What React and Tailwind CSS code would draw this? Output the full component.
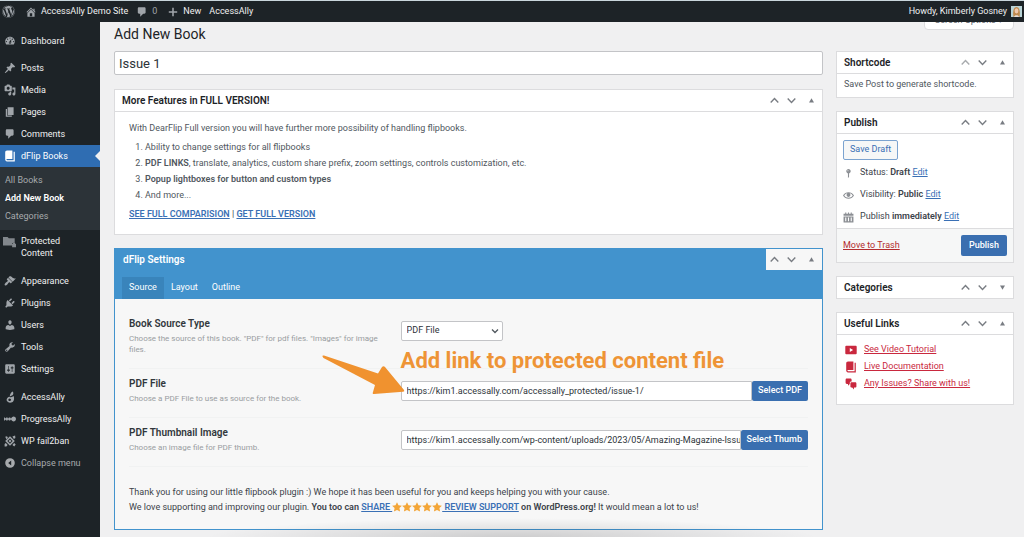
import { useState } from "react";
import { FaWordpress } from "react-icons/fa";

const paths = {
  dashboard: "M3.76 16h12.48c1.1-1.37 1.76-3.11 1.76-5 0-4.42-3.58-8-8-8s-8 3.58-8 8c0 1.89.66 3.63 1.76 5zM10 4c.55 0 1 .45 1 1s-.45 1-1 1-1-.45-1-1 .45-1 1-1zM6 6c.55 0 1 .45 1 1s-.45 1-1 1-1-.45-1-1 .45-1 1-1zm8 0c.55 0 1 .45 1 1s-.45 1-1 1-1-.45-1-1 .45-1 1-1zm-5.37 5.55L12 7v6c0 1.1-.9 2-2 2s-2-.9-2-2c0-.57.24-1.08.63-1.45zM4 10c.55 0 1 .45 1 1s-.45 1-1 1-1-.45-1-1 .45-1 1-1zm12 0c.55 0 1 .45 1 1s-.45 1-1 1-1-.45-1-1 .45-1 1-1zm-5 3c0-.55-.45-1-1-1s-1 .45-1 1 .45 1 1 1 1-.45 1-1z",
  pin: "M10.44 3.02l1.82-1.82 6.36 6.35-1.83 1.82c-1.05-.68-2.48-.57-3.41.36l-.75.75c-.92.93-1.04 2.35-.35 3.41l-1.83 1.82-2.41-2.41-2.8 2.79c-.42.42-3.38 2.71-3.8 2.29s1.86-3.39 2.28-3.81l2.79-2.79L4.1 9.36l1.83-1.82c1.05.69 2.48.57 3.4-.36l.75-.75c.93-.92 1.05-2.35.36-3.41z",
  media: "M13 11V4c0-.55-.45-1-1-1h-1.67L9 1H5L3.67 3H2c-.55 0-1 .45-1 1v7c0 .55.45 1 1 1h10c.55 0 1-.45 1-1zM7 4.5c1.38 0 2.5 1.12 2.5 2.5S8.38 9.5 7 9.5 4.5 8.38 4.5 7 5.62 4.5 7 4.5zM14 6h5v10.5c0 1.38-1.12 2.5-2.5 2.5S14 17.88 14 16.5s1.12-2.5 2.5-2.5c.17 0 .34.02.5.05V9h-3V6zm-4 8.05V13h2v3.5c0 1.38-1.12 2.5-2.5 2.5S7 17.88 7 16.5 8.12 14 9.5 14c.17 0 .34.02.5.05z",
  page: "M6 15V2h10v13H6zm-1 1h8v2H3V5h2v11z",
  comment: "M5 2h9c1.1 0 2 .9 2 2v7c0 1.1-.9 2-2 2h-2l-5 5v-5H5c-1.1 0-2-.9-2-2V4c0-1.1.9-2 2-2z",
  book: "M16 3h2v16H5c-1.66 0-3-1.34-3-3V4c0-1.66 1.34-3 3-3h9v14H5c-.55 0-1 .45-1 1s.45 1 1 1h11V3z",
  folder: "M0 3h7l2 2h9v7h-2a2 2 0 0 0-2 2v2H0zM15 14v-.5a2 2 0 0 1 4 0v.5h1v5h-6v-5z",
  brush: "M14.48 11.06L7.41 3.99l1.5-1.5c.5-.56 2.3-.47 3.51.32 1.21.8 1.43 1.28 2.91 2.1 1.18.64 2.45 1.26 4.45.85zm-.71.71L6.7 4.7 4.93 6.47c-.39.39-.39 1.02 0 1.41l1.06 1.06c.39.39.39 1.03 0 1.42-.6.6-1.43 1.11-2.21 1.69-.35.26-.7.53-1.01.84C1.43 14.23.4 16.08 1.4 17.07c.99 1 2.84-.03 4.18-1.36.31-.31.58-.66.85-1.02.57-.78 1.08-1.61 1.69-2.21.39-.39 1.02-.39 1.41 0l1.06 1.06c.39.39 1.02.39 1.41 0z",
  plug: "M13.11 4.36L9.87 7.6 8 5.73l3.24-3.24c.35-.34 1.05-.2 1.56.32.52.51.66 1.21.31 1.55zm-8 1.77l.91-1.12 9.01 9.01-1.19.84c-.71.71-2.63 1.16-3.82 1.16H6.14L4.9 17.26c-.59.59-1.54.59-2.12 0-.59-.58-.59-1.53 0-2.12l1.24-1.24v-3.88c0-1.13.4-3.19 1.09-3.89zm7.26 3.97l3.24-3.24c.34-.35 1.04-.21 1.55.31.52.51.66 1.21.31 1.55l-3.24 3.25z",
  user: "M10 9.25c-2.27 0-2.73-3.44-2.73-3.44C7 4.02 7.82 2 9.97 2c2.16 0 2.98 2.02 2.71 3.81 0 0-.41 3.44-2.68 3.44zm0 2.57L12.72 10c2.39 0 4.52 2.33 4.52 4.53v2.49s-3.65 1.13-7.24 1.13c-3.65 0-7.24-1.13-7.24-1.13v-2.49c0-2.25 1.94-4.48 4.47-4.48z",
  wrench: "M16.68 9.77c-1.34 1.34-3.3 1.67-4.95.99l-5.41 6.52c-.99.99-2.59.99-3.58 0s-.99-2.59 0-3.57l6.52-5.42c-.68-1.65-.35-3.61.99-4.95 1.28-1.28 3.12-1.62 4.72-1.06l-2.89 2.89 2.82 2.82 2.86-2.87c.53 1.58.18 3.39-1.08 4.65zM3.81 16.21c.4.39 1.04.39 1.43 0 .4-.4.4-1.04 0-1.43-.39-.4-1.03-.4-1.43 0-.39.39-.39 1.03 0 1.43z",
  sliders: "M18 16V4c0-1.1-.9-2-2-2H4c-1.1 0-2 .9-2 2v12c0 1.1.9 2 2 2h12c1.1 0 2-.9 2-2zM8 11h1c.55 0 1 .45 1 1s-.45 1-1 1H8v1.5c0 .28-.22.5-.5.5s-.5-.22-.5-.5V13H6c-.55 0-1-.45-1-1s.45-1 1-1h1V5.5c0-.28.22-.5.5-.5s.5.22.5.5V11zm5-2h-1c-.55 0-1-.45-1-1s.45-1 1-1h1V5.5c0-.28.22-.5.5-.5s.5.22.5.5V7h1c.55 0 1 .45 1 1s-.45 1-1 1h-1v5.5c0 .28-.22.5-.5.5s-.5-.22-.5-.5V9z",
  ally: "M14.5 1c1.6 1.5 1.2 4.800-.4 6.200L9.500 9c.6-3.500 2-6.500 5-8zM8.500 9.500c3 1.800 5.500.8 7.500-1 1.500 3.500.8 8.500-2.500 10.200-3.500 1.600-8 .3-9-2.700-.8-2.800 1.500-5.500 4-6.500zm.5 3c-1.500.7-2.300 2-1.500 3.300.8 1.200 3 1.200 4 .2 1-1.200 0-3-2.500-3.500z",
  progress: "M0 7.500h1.500v1.200h2V7.500H6v1.200h2V7.500h2.500v1.200h1.700a4 4 0 1 1 0 2.600h-1.700v1.200H8v-1.200H6v1.200H3.500v-1.200h-2v1.200H0z",
  ban: "M10 2l8 8-8 8-8-8zm0 3.500L5.500 10l4.500 4.500 4.500-4.500zm0 2l2.500 2.500-2.500 2.500L7.500 10zM2 3l3-1 1.500 2.500L4 7zM14 2.500L18.500 1 19 5l-2.500 1.500zM1 15l2-1.500 3 3L4 19H1zM17 13.500L19.500 16 17 19l-3-2.500z",
  collapse: "M10 2a8 8 0 1 0 0 16 8 8 0 0 0 0-16zm2 4v8l-5-4z",
  home: "M16 8.500l1.530 1.530-1.060 1.060L10 4.600l-6.470 6.490-1.060-1.060L10 2.500l4 4v-2h2v4zm-6-2.460l6 5.990V18H4v-5.970zM12 17v-5H8v5h4z",
  plus: "M17 8.700v2.600h-5.700V17H8.700v-5.700H3V8.700h5.700V3h2.600v5.700z",
  status: "M14 6c0 1.860-1.280 3.410-3 3.860V16c0 1-2 2-2 2V9.860C7.280 9.410 6 7.860 6 6c0-2.210 1.790-4 4-4s4 1.790 4 4zM8 5c0 .55.45 1 1 1s1-.45 1-1-.45-1-1-1-1 .45-1 1z",
  eye: "M19.7 9.400C17.700 6 14 3.900 10 3.900S2.300 6 .3 9.400L0 10l.3.600c2 3.400 5.700 5.500 9.700 5.500s7.700-2.100 9.700-5.500l.3-.6-.3-.6zM10 14.100c-3.100 0-6-1.600-7.700-4.100C3.600 8 5.700 6.600 8 6.100c-.9.6-1.500 1.700-1.500 2.900 0 1.900 1.600 3.500 3.500 3.500s3.500-1.600 3.500-3.500c0-1.200-.6-2.300-1.500-2.900 2.300.5 4.400 1.900 5.700 3.900-1.700 2.500-4.600 4.100-7.700 4.100z",
  calendar: "M1 3h3V1h2v2h3V1h2v2h3V1h2v2h3v4H1zM1 8h18v11H1zm3 2v7h2v-7zm5 0v7h2v-7zm5 0v7h2v-7z",
  video: "M2 3h16a1.500 1.500 0 0 1 1.500 1.500v11A1.500 1.500 0 0 1 18 17H2a1.500 1.500 0 0 1-1.500-1.500v-11A1.500 1.500 0 0 1 2 3zm6 3.500v7l5.500-3.500z",
  chat: "M11 6h-.82C9.070 6 8 7.200 8 8.160V10l-3 3v-3H3c-1.100 0-2-.9-2-2V3c0-1.100.9-2 2-2h6c1.100 0 2 .9 2 2v3zm0 1h6c1.100 0 2 .9 2 2v5c0 1.100-.9 2-2 2h-2v3l-3-3h-1c-1.100 0-2-.9-2-2V9c0-1.100.9-2 2-2z",
};

function Icon({ name, className }) {
  return (
    <svg viewBox="0 0 20 20" fill="currentColor" fillRule="evenodd" aria-hidden="true" className={`shrink-0 ${className}`}>
      <path d={paths[name]} />
    </svg>
  );
}

const menuTop = [
  { icon: "pin", label: "Posts" },
  { icon: "media", label: "Media" },
  { icon: "page", label: "Pages" },
  { icon: "comment", label: "Comments" },
];

const menuMiddle = [
  { icon: "brush", label: "Appearance" },
  { icon: "plug", label: "Plugins" },
  { icon: "user", label: "Users" },
  { icon: "wrench", label: "Tools" },
  { icon: "sliders", label: "Settings" },
];

const menuBottom = [
  { icon: "ally", label: "AccessAlly" },
  { icon: "progress", label: "ProgressAlly" },
  { icon: "ban", label: "WP fail2ban" },
];

function MenuItem({ icon, label }) {
  return (
    <a href="#" className="flex min-h-[22px] items-center gap-[5px] pl-1 pr-2 text-[#f0f0f1]">
      <Icon name={icon} className="size-3 text-[#a0a5aa]" />
      {label}
    </a>
  );
}

function AdminBar() {
  return (
    <header className="relative z-10 flex h-[22px] items-center border-t border-[#c9d6dc] bg-[#1d2327] pl-0.5 pr-0.5 text-[9px] text-[#f0f0f1]">
      <a href="#" aria-label="About WordPress"><FaWordpress size={13} className="text-[#a0a5aa]" /></a>
      <a href="#" className="ml-2.5 flex items-center gap-1">
        <Icon name="home" className="size-3 text-[#a0a5aa]" />
        AccessAlly Demo Site
      </a>
      <a href="#" className="ml-2 flex items-center gap-1 text-[#a0a5aa]">
        <Icon name="comment" className="size-3" />
        0
      </a>
      <a href="#" className="ml-2.5 flex items-center gap-1">
        <Icon name="plus" className="size-3 text-[#a0a5aa]" />
        New
      </a>
      <a href="#" className="ml-2">AccessAlly</a>
      <a href="#" className="ml-auto flex items-center gap-1">
        Howdy, Kimberly Gosney
        <svg viewBox="0 0 11 11" className="size-[11px]" aria-hidden="true">
          <rect width="11" height="11" fill="#b9d3d6" />
          <path d="M2.500 11C1.500 6 2.500 1 5.500 1s4 5 3 10z" fill="#c08a4e" />
          <ellipse cx="5.500" cy="4.800" rx="1.900" ry="2.600" fill="#f0c9ae" />
          <path d="M3 11c.3-2.500 4.700-2.500 5 0z" fill="#e8e0dc" />
        </svg>
      </a>
    </header>
  );
}

function Sidebar() {
  return (
    <nav className="w-[100px] shrink-0 bg-[#1d2327] pt-2 text-[9px] leading-3">
      <MenuItem icon="dashboard" label="Dashboard" />
      <div className="h-[5px]" />
      {menuTop.map((m) => <MenuItem key={m.label} {...m} />)}

      <a href="#" className="relative flex h-[22px] items-center gap-[5px] bg-[#2f6db2] pl-1 text-white">
        <Icon name="book" className="size-3" />
        dFlip Books
        <span className="absolute right-0 top-1.5 border-y-5 border-r-5 border-y-transparent border-r-[#f0f0f1]" />
      </a>
      <div className="flex flex-col bg-[#2c3338] pb-[5px] pl-[5px] pt-1 leading-[18px] text-[#a7aaad]">
        <a href="#">All Books</a>
        <a href="#" className="font-semibold text-white">Add New Book</a>
        <a href="#">Categories</a>
      </div>

      <a href="#" className="flex items-start gap-[5px] py-[5px] pl-[3px] pr-7 text-[#f0f0f1]">
        <Icon name="folder" className="size-[13px] text-[#82878c]" />
        Protected Content
      </a>
      <div className="h-1.5" />
      {menuMiddle.map((m) => <MenuItem key={m.label} {...m} />)}
      <div className="h-1.5" />
      {menuBottom.map((m) => <MenuItem key={m.label} {...m} />)}
      <button type="button" className="flex h-[22px] items-center gap-[5px] pl-1 text-[#a7aaad]">
        <Icon name="collapse" className="size-3" />
        Collapse menu
      </button>
    </nav>
  );
}

// Move up / move down / toggle buttons in a panel header
function PanelControls({ closed, firstItem, onToggle }) {
  return (
    <div className="flex h-[21px] items-center gap-2 pl-1 pr-[7px] text-[#787c82]">
      <button type="button" aria-label="Move up" className={firstItem ? "text-[#a7aaad]" : ""}>
        <svg viewBox="0 0 9 9" className="size-[9px]" fill="none" stroke="currentColor" strokeWidth="1.400"><path d="M.7 6.400l3.800-3.800 3.800 3.800" /></svg>
      </button>
      <button type="button" aria-label="Move down">
        <svg viewBox="0 0 9 9" className="size-[9px]" fill="none" stroke="currentColor" strokeWidth="1.400"><path d="M.7 2.600l3.800 3.800 3.800-3.800" /></svg>
      </button>
      <button type="button" aria-label="Toggle panel" onClick={onToggle} className="pl-1">
        <svg viewBox="0 0 7 7" className="size-[7px]" fill="currentColor">
          <path d={closed ? "M1 1.400h5L3.500 5.800z" : "M1 5.600h5L3.500 1.200z"} />
        </svg>
      </button>
    </div>
  );
}

function Panel({ title, firstItem, startClosed = false, children }) {
  const [closed, setClosed] = useState(startClosed);

  return (
    <section className="border border-[#dcdcde] bg-white">
      <div className={`flex items-center justify-between pl-[7px] ${closed ? "" : "border-b border-[#dcdcde]"}`}>
        <h2 className="text-[10px] font-semibold text-[#1d2327]">{title}</h2>
        <PanelControls closed={closed} firstItem={firstItem} onToggle={() => setClosed((v) => !v)} />
      </div>
      {!closed && children}
    </section>
  );
}

function SettingRow({ id, title, desc, children }) {
  return (
    <div className="flex border-b border-[#f1f2f2] pb-[13px]">
      <div className="w-2/5 shrink-0 pr-3 pt-2">
        <label htmlFor={id} className="block text-[10px] font-semibold leading-3.5 text-[#32373c]">{title}</label>
        <p className="mt-0.5 text-[8px] leading-[11px] text-[#999da1]">{desc}</p>
      </div>
      <div className="relative min-w-0 flex-1 pt-3">
        {children}
      </div>
    </div>
  );
}

const fieldStyle = "h-5 rounded-l-xs border border-[#c3c4c7] bg-white px-[5px] text-[9px] text-[#2c3338] focus:outline-none focus:border-[#2f6db2]";
const blueButton = "shrink-0 rounded-xs bg-[#3a6fb0] px-1.5 text-[9px] font-medium text-white";
const link = "text-[#3a70b5] underline";

function FlipSettings() {
  const [tab, setTab] = useState("Source");
  const [closed, setClosed] = useState(false);

  return (
    <section className="border border-[#4293cd] bg-[#f7f7f7]">
      <div className="bg-[#4293cd]">
        <div className="flex items-center justify-between pl-2">
          <h2 className="text-[10px] font-semibold text-white">dFlip Settings</h2>
          <div className="bg-[#f7f7f7]">
            <PanelControls closed={closed} onToggle={() => setClosed((v) => !v)} />
          </div>
        </div>
        <div role="tablist" className="flex pl-[7px] pt-[7px]">
          {["Source", "Layout", "Outline"].map((t) => (
            <button
              key={t}
              type="button"
              role="tab"
              aria-selected={tab === t}
              onClick={() => setTab(t)}
              className={`h-[22px] px-[7px] text-[9px] text-white ${tab === t ? "bg-[#3984bb]" : ""}`}
            >
              {t}
            </button>
          ))}
        </div>
      </div>

      {!closed && (
        <div className="px-3.5 pb-3.5 pt-2.5">
          <SettingRow id="source" title="Book Source Type" desc={'Choose the source of this book. "PDF" for pdf files. "Images" for image files.'}>
            <div className="relative w-[102px]">
              <select id="source" className="block h-5 w-full appearance-none rounded-xs border border-[#c3c4c7] bg-white px-[5px] text-[9px] text-[#2c3338]">
                <option>PDF File</option>
                <option>Image Files</option>
              </select>
              <svg viewBox="0 0 8 8" className="pointer-events-none absolute right-1 top-1.5 size-2" fill="none" stroke="#50575e" strokeWidth="1.300">
                <path d="M1 2.500l3 3 3-3" />
              </svg>
            </div>
          </SettingRow>

          <SettingRow id="pdf" title="PDF File" desc="Choose a PDF File to use as source for the book.">
            <div className="flex">
              <input id="pdf" defaultValue="https://kim1.accessally.com/accessally_protected/issue-1/" className={`min-w-0 flex-1 ${fieldStyle}`} />
              <button type="button" className={blueButton}>Select PDF</button>
            </div>
            {/* Callout */}
            <p className="absolute -top-5 left-0 whitespace-nowrap text-[22px] font-bold leading-6 text-[#ee9436]">
              Add link to protected content file
            </p>
            <svg viewBox="0 0 84 40" className="absolute -left-20 -top-3.5 h-10 w-[84px]" fill="#f0922f" aria-hidden="true">
              <path d="M1.500 1.500Q1 .2 3 .5L57 18.500l4-6.500q1.500-1.500 3 0l19 23q1 1.500-1 1.800L53 39q-2 0-1-2l2-7L2.500 3z" />
            </svg>
          </SettingRow>

          <SettingRow id="thumb" title="PDF Thumbnail Image" desc="Choose an image file for PDF thumb.">
            <div className="flex">
              <input id="thumb" defaultValue="https://kim1.accessally.com/wp-content/uploads/2023/05/Amazing-Magazine-Issue-1.png" className={`min-w-0 flex-1 ${fieldStyle} pr-0`} />
              <button type="button" className={blueButton}>Select Thumb</button>
            </div>
          </SettingRow>

          <div className="mt-[18px] text-[9px] leading-[15px] text-[#3c434a]">
            <p>Thank you for using our little flipbook plugin :) We hope it has been useful for you and keeps helping you with your cause.</p>
            <p>
              We love supporting and improving our plugin.{" "}
              <strong className="font-semibold">
                You too can{" "}
                <a href="#" className={link}>
                  SHARE <Stars /> REVIEW SUPPORT
                </a>{" "}
                on WordPress.org!
              </strong>{" "}
              It would mean a lot to us!
            </p>
          </div>
        </div>
      )}
    </section>
  );
}

function Stars() {
  return (
    <svg viewBox="0 0 50 10" className="inline-block h-2.5 w-[50px] align-[-2px]" fill="#f3a537" role="img" aria-label="5 stars">
      {[0, 10, 20, 30, 40].map((x) => (
        <path key={x} transform={`translate(${x} 0)`} d="M5 .2l1.500 3.100 3.400.4-2.500 2.400.7 3.500L5 7.900 1.900 9.600l.7-3.500L.1 3.700l3.400-.4z" />
      ))}
    </svg>
  );
}

function PublishPanel() {
  return (
    <Panel title="Publish">
      <div className="px-1.5 pt-1.5 text-[9px] text-[#3c434a]">
        <button type="button" className="h-5 rounded-xs border border-[#7ba3d0] bg-[#f6f7f7] px-1.5 text-[#3a70b5]">Save Draft</button>
        <ul className="pt-0.5">
          <li className="flex h-[22px] items-center gap-1.5">
            <Icon name="status" className="size-[11px] text-[#8c8f94]" />
            <span>Status: <b className="font-semibold">Draft</b> <a href="#" className={link}>Edit</a></span>
          </li>
          <li className="flex h-[22px] items-center gap-1.5">
            <Icon name="eye" className="size-[11px] text-[#8c8f94]" />
            <span>Visibility: <b className="font-semibold">Public</b> <a href="#" className={link}>Edit</a></span>
          </li>
          <li className="flex h-[22px] items-center gap-1.5">
            <Icon name="calendar" className="size-[11px] text-[#8c8f94]" />
            <span>Publish <b className="font-semibold">immediately</b> <a href="#" className={link}>Edit</a></span>
          </li>
        </ul>
      </div>
      <div className="flex items-center justify-between border-t border-[#dcdcde] bg-[#f6f7f7] px-1.5 py-1.5 text-[9px]">
        <a href="#" className="text-[#b32d2e] underline">Move to Trash</a>
        <button type="button" className="h-[21px] rounded-xs bg-[#3a6fb0] px-2 font-medium text-white">Publish</button>
      </div>
    </Panel>
  );
}

export default function App() {
  return (
    <div className="relative flex min-h-screen flex-col overflow-hidden bg-[#f0f0f1] font-['Roboto',sans-serif]">
      <AdminBar />
      <div className="flex flex-1">
        <Sidebar />
        <main className="min-w-0 flex-1 pb-2 pl-3.5 pr-2.5">
          <div className="flex h-[29px] items-start justify-between">
            <h1 className="text-[14px] leading-6 text-[#1d2327]">Add New Book</h1>
            <button type="button" className="-mt-2.5 h-[18px] rounded-b-sm border border-[#dcdcde] bg-white px-2.5 text-[9px] text-[#646970]">
              Screen Options ▾
            </button>
          </div>

          <div className="flex items-start gap-[13px]">
            <div className="flex min-w-0 flex-1 flex-col">
              <input
                aria-label="Title"
                defaultValue="Issue 1"
                className="h-6 w-full rounded-xs border border-[#c3c4c7] bg-white px-1 text-[13px] text-[#2c3338] focus:outline-none"
              />
              <div className="mb-[13px] mt-3.5">
                <Panel title="More Features in FULL VERSION!">
                  <div className="px-3.5 pb-3 pt-2 text-[9px] leading-4 text-[#50575e]">
                    <p>With DearFlip Full version you will have further more possibility of handling flipbooks.</p>
                    <ol className="my-[3px] list-decimal pl-4">
                      <li>Ability to change settings for all flipbooks</li>
                      <li><b className="font-semibold">PDF LINKS</b>, translate, analytics, custom share prefix, zoom settings, controls customization, etc.</li>
                      <li><b className="font-semibold">Popup lightboxes for button and custom types</b></li>
                      <li>And more...</li>
                    </ol>
                    <p className="font-semibold">
                      <a href="#" className={link}>SEE FULL COMPARISION</a> | <a href="#" className={link}>GET FULL VERSION</a>
                    </p>
                  </div>
                </Panel>
              </div>
              <FlipSettings />
            </div>

            <aside className="flex w-[178px] shrink-0 flex-col gap-[13px]">
              <Panel title="Shortcode" firstItem>
                <p className="px-[7px] pb-[5px] pt-[3px] text-[9px] leading-[15px] text-[#50575e]">Save Post to generate shortcode.</p>
              </Panel>
              <PublishPanel />
              <Panel title="Categories" startClosed />
              <Panel title="Useful Links">
                <ul className="px-2 pb-3 pt-1.5 text-[9px] text-[#c9283e]">
                  {[
                    ["video", "See Video Tutorial"],
                    ["book", "Live Documentation"],
                    ["chat", "Any Issues? Share with us!"],
                  ].map(([icon, text]) => (
                    <li key={text} className="flex h-[17px] items-center gap-[7px]">
                      <Icon name={icon} className="size-3" />
                      <a href="#" className="underline">{text}</a>
                    </li>
                  ))}
                </ul>
              </Panel>
            </aside>
          </div>
        </main>
      </div>
      {/* soft shadow along the bottom edge */}
      <div className="pointer-events-none absolute inset-x-1/5 bottom-0 h-5 bg-radial-[farthest-side_at_50%_100%] from-black/15 to-transparent" />
    </div>
  );
}
